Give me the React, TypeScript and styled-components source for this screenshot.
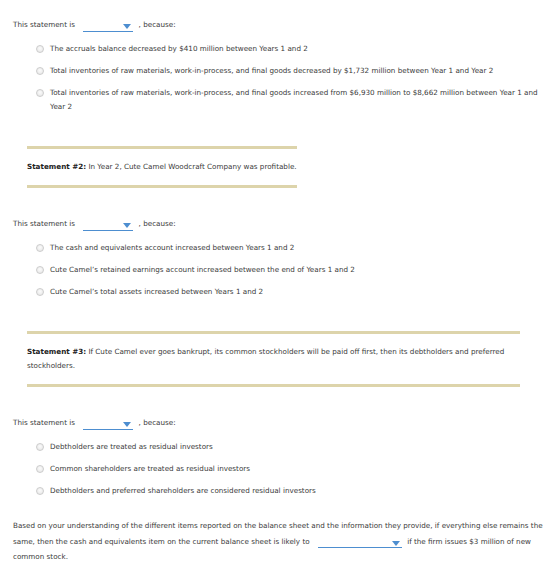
import styled, { createGlobalStyle } from "styled-components";

const GlobalStyle = createGlobalStyle`
  body {
    margin: 0;
    background: #fff;
    font-family: "DejaVu Sans", Verdana, sans-serif;
    font-size: 7.2px;
    color: #3a3a3a;
  }
`;

interface Question {
  readonly options: string[];
}

const QUESTIONS: Question[] = [
  {
    options: [
      "The accruals balance decreased by $410 million between Years 1 and 2",
      "Total inventories of raw materials, work-in-process, and final goods decreased by $1,732 million between Year 1 and Year 2",
      "Total inventories of raw materials, work-in-process, and final goods increased from $6,930 million to $8,662 million between Year 1 and Year 2",
    ],
  },
  {
    options: [
      "The cash and equivalents account increased between Years 1 and 2",
      "Cute Camel\u2019s retained earnings account increased between the end of Years 1 and 2",
      "Cute Camel\u2019s total assets increased between Years 1 and 2",
    ],
  },
  {
    options: [
      "Debtholders are treated as residual investors",
      "Common shareholders are treated as residual investors",
      "Debtholders and preferred shareholders are considered residual investors",
    ],
  },
];

const STATEMENTS = [
  {
    label: "Statement #2:",
    text: " In Year 2, Cute Camel Woodcraft Company was profitable.",
  },
  {
    label: "Statement #3:",
    text: " If Cute Camel ever goes bankrupt, its common stockholders will be paid off first, then its debtholders and preferred stockholders.",
  },
];

export default function App() {
  return (
    <>
      <GlobalStyle />
      <Page>
        <QuestionBlock question={QUESTIONS[0]} />
        <Statement {...STATEMENTS[0]} />
        <QuestionBlock question={QUESTIONS[1]} />
        <Statement {...STATEMENTS[1]} />
        <QuestionBlock question={QUESTIONS[2]} />
        <Closing>
          Based on your understanding of the different items reported on the
          balance sheet and the information they provide, if everything else
          remains the same, then the cash and equivalents item on the current
          balance sheet is likely to <Dropdown $width={84} /> if the firm
          issues $3 million of new common stock.
        </Closing>
      </Page>
    </>
  );
}

function QuestionBlock({ question }: { question: Question }) {
  return (
    <section>
      <Prompt>
        This statement is <Dropdown $width={50} /> , because:
      </Prompt>
      <Options>
        {question.options.map((o) => (
          <Option key={o}>
            <Radio />
            <span>{o}</span>
          </Option>
        ))}
      </Options>
    </section>
  );
}

function Statement({ label, text }: { label: string; text: string }) {
  return (
    <StatementBox>
      <b>{label}</b>
      {text}
    </StatementBox>
  );
}

function Dropdown({ $width }: { $width: number }) {
  return (
    <Select $width={$width}>
      <svg width="8" height="5" viewBox="0 0 8 5">
        <path d="M0 0h8L4 5z" fill="#4d8ed0" />
      </svg>
    </Select>
  );
}

const Page = styled.div`
  padding: 18px 13px 20px 13px;
  width: 534px;
`;

const Prompt = styled.div`
  line-height: 14px;
  white-space: nowrap;
`;

const Select = styled.span<{ $width: number }>`
  display: inline-flex;
  justify-content: flex-end;
  align-items: center;
  box-sizing: border-box;
  width: ${(p) => p.$width}px;
  height: 9px;
  margin: 0 3px 0 6px;
  padding-right: 2px;
  border-bottom: 1px solid #4d8ed0;
  vertical-align: -2px;
`;

const Options = styled.ul`
  list-style: none;
  margin: 0;
  padding: 10px 0 0 23px;
  display: flex;
  flex-direction: column;
  gap: 8px;
`;

const Option = styled.li`
  display: flex;
  align-items: flex-start;
  gap: 6px;
  line-height: 14px;
`;

const Radio = styled.span`
  flex: none;
  width: 6px;
  height: 6px;
  margin-top: 3px;
  border-radius: 50%;
  border: 1px solid #cccccc;
  background: radial-gradient(circle at 50% 40%, #fbfbfb, #e4e4e4);
`;

const StatementBox = styled.div`
  display: table;
  max-width: 493px;
  margin: 32px 0 29px 14px;
  padding: 11px 0 11px;
  border-top: 3px solid #ddd4ab;
  border-bottom: 3px solid #ddd4ab;
  line-height: 14px;

  b {
    font-weight: bold;
    color: #222;
  }
`;

const Closing = styled.p`
  margin: 20px 0 0;
  line-height: 15.5px;
`;
